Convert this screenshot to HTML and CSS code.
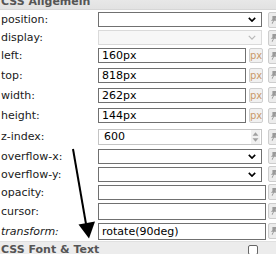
FILE: index.html
```html
<!DOCTYPE html>
<html>
<head>
  <meta name="viewport" content="width=device-width, initial-scale=1.0">
  <title>CSS Properties</title>
  <link rel="stylesheet" href="styles.css">
</head>
<body>

  <div class="panel">
    <div class="section-head">CSS Allgemein</div>

    <!-- position -->
    <div class="row h19">
      <span class="lbl">position:</span>
      <div class="ctl"><div class="select"><svg class="chev" viewBox="0 0 10 6"><polyline points="1,1 5,5 9,1"/></svg></div></div>
      <span class="pin"><svg viewBox="0 0 10 12"><path d="M3 1h5l-1 4 2 2H5l-2 4-1-1 2-3H1l2-2z"/></svg></span>
    </div>

    <!-- display -->
    <div class="row h17">
      <span class="lbl">display:</span>
      <div class="ctl"><div class="select disabled"><svg class="chev" viewBox="0 0 10 6"><polyline points="1,1 5,5 9,1"/></svg></div></div>
      <span class="pin"><svg viewBox="0 0 10 12"><path d="M3 1h5l-1 4 2 2H5l-2 4-1-1 2-3H1l2-2z"/></svg></span>
    </div>

    <div class="row h19">
      <span class="lbl">left:</span>
      <div class="ctl"><input class="txt unit" type="text" value="160px"><span class="px">px</span></div>
      <span class="pin"><svg viewBox="0 0 10 12"><path d="M3 1h5l-1 4 2 2H5l-2 4-1-1 2-3H1l2-2z"/></svg></span>
    </div>

    <div class="row h20">
      <span class="lbl">top:</span>
      <div class="ctl"><input class="txt unit" type="text" value="818px"><span class="px">px</span></div>
      <span class="pin"><svg viewBox="0 0 10 12"><path d="M3 1h5l-1 4 2 2H5l-2 4-1-1 2-3H1l2-2z"/></svg></span>
    </div>

    <div class="row h20">
      <span class="lbl">width:</span>
      <div class="ctl"><input class="txt unit" type="text" value="262px"><span class="px">px</span></div>
      <span class="pin"><svg viewBox="0 0 10 12"><path d="M3 1h5l-1 4 2 2H5l-2 4-1-1 2-3H1l2-2z"/></svg></span>
    </div>

    <div class="row h21">
      <span class="lbl">height:</span>
      <div class="ctl"><input class="txt unit" type="text" value="144px"><span class="px">px</span></div>
      <span class="pin"><svg viewBox="0 0 10 12"><path d="M3 1h5l-1 4 2 2H5l-2 4-1-1 2-3H1l2-2z"/></svg></span>
    </div>

    <!-- z-index number field -->
    <div class="row h21">
      <span class="lbl">z-index:</span>
      <div class="ctl">
        <div class="number">
          <span class="num-val">600</span>
          <span class="spin"><svg viewBox="0 0 7 12"><polygon points="1,5 6,5 3.5,2"/><polygon points="1,7 6,7 3.5,10"/></svg></span>
        </div>
      </div>
      <span class="pin"><svg viewBox="0 0 10 12"><path d="M3 1h5l-1 4 2 2H5l-2 4-1-1 2-3H1l2-2z"/></svg></span>
    </div>

    <div class="row h18">
      <span class="lbl">overflow-x:</span>
      <div class="ctl"><div class="select"><svg class="chev" viewBox="0 0 10 6"><polyline points="1,1 5,5 9,1"/></svg></div></div>
      <span class="pin"><svg viewBox="0 0 10 12"><path d="M3 1h5l-1 4 2 2H5l-2 4-1-1 2-3H1l2-2z"/></svg></span>
    </div>

    <div class="row h18">
      <span class="lbl">overflow-y:</span>
      <div class="ctl"><div class="select"><svg class="chev" viewBox="0 0 10 6"><polyline points="1,1 5,5 9,1"/></svg></div></div>
      <span class="pin"><svg viewBox="0 0 10 12"><path d="M3 1h5l-1 4 2 2H5l-2 4-1-1 2-3H1l2-2z"/></svg></span>
    </div>

    <div class="row h18">
      <span class="lbl">opacity:</span>
      <div class="ctl"><input class="txt wide" type="text" value=""></div>
      <span class="pin"><svg viewBox="0 0 10 12"><path d="M3 1h5l-1 4 2 2H5l-2 4-1-1 2-3H1l2-2z"/></svg></span>
    </div>

    <div class="row h20">
      <span class="lbl">cursor:</span>
      <div class="ctl"><input class="txt wide tall" type="text" value=""></div>
      <span class="pin"><svg viewBox="0 0 10 12"><path d="M3 1h5l-1 4 2 2H5l-2 4-1-1 2-3H1l2-2z"/></svg></span>
    </div>

    <div class="row h20">
      <span class="lbl italic">transform:</span>
      <div class="ctl"><input class="txt wide tall" type="text" value="rotate(90deg)"></div>
      <span class="pin"><svg viewBox="0 0 10 12"><path d="M3 1h5l-1 4 2 2H5l-2 4-1-1 2-3H1l2-2z"/></svg></span>
    </div>

    <div class="section-head second">
      <span>CSS Font &amp; Text</span>
      <span class="check"></span>
    </div>
  </div>

  <!-- annotation arrow drawn over the form -->
  <svg class="arrow" width="276" height="254" viewBox="0 0 276 254">
    <line x1="73" y1="149" x2="86" y2="224"/>
    <polygon points="78.5,224.5 95,221.5 89,238.5"/>
  </svg>

</body>
</html>
```

FILE: styles.css
```css
* { box-sizing: border-box; }
body {
  margin: 0;
  width: 276px;
  height: 254px;
  overflow: hidden;
  position: relative;
  background: #fff;
  font-family: "DejaVu Sans", Verdana, sans-serif;
  font-size: 11px;
  color: #1a1a1a;
}
.panel {
  margin-top: -7px;
}
.section-head {
  height: 17px;
  line-height: 17px;
  padding-left: 1px;
  font-weight: bold;
  color: #555;
  background: linear-gradient(#ececec, #e2e2e2);
  border-bottom: 1px solid #d6d6d6;
}
.section-head.second {
  display: flex;
  justify-content: space-between;
  align-items: center;
  height: 15px;
  border-bottom: none;
  border-top: 1px solid #e0e0e0;
  background: #ececec;
  padding-right: 18px;
}
.check {
  width: 10px;
  height: 10px;
  margin-top: 2px;
  border: 1px solid #666;
  border-radius: 2px;
  background: #fff;
}
.row {
  display: grid;
  grid-template-columns: 98px 168px 1fr;
  align-items: center;
}
.h17 { height: 17px; }
.h18 { height: 18px; }
.h19 { height: 19px; }
.h20 { height: 20px; }
.h21 { height: 21px; }
.lbl {
  padding-left: 1px;
  white-space: nowrap;
}
.italic { font-style: italic; }
.ctl {
  display: flex;
  align-items: center;
  height: 100%;
}
.select {
  position: relative;
  width: 164px;
  height: 15px;
  border: 1px solid #707070;
  background: #fff;
}
.select.disabled {
  border-color: #dadada;
  background: #f7f7f7;
}
.chev {
  position: absolute;
  right: 5px;
  top: 4px;
  width: 8px;
  height: 5px;
  fill: none;
  stroke: #000;
  stroke-width: 2;
}
.disabled .chev { stroke: #b8b8b8; stroke-width: 1.5; }
.txt {
  height: 15px;
  margin: 0;
  padding: 0 3px;
  border: 1px solid #707070;
  font-family: inherit;
  font-size: 11px;
  color: #000;
  background: #fff;
  outline: none;
}
.unit { width: 148px; }
.wide { width: 168px; }
.tall { height: 17px; }
.px {
  width: 14px;
  height: 15px;
  margin-left: 3px;
  border: 1px solid #cfcfcf;
  border-radius: 2px;
  background: #f1f1f1;
  color: #c99a6b;
  font-size: 10px;
  line-height: 13px;
  text-align: center;
}
.number {
  display: flex;
  align-items: center;
  width: 164px;
  height: 16px;
  border: 1px solid #c4c4c4;
  background: #fff;
}
.num-val {
  flex: 1;
  padding-left: 5px;
  color: #000;
}
.spin {
  width: 9px;
  height: 14px;
  margin-right: 1px;
  background: #f0f0f0;
}
.spin svg {
  width: 9px;
  height: 14px;
  fill: #a0a0a0;
}
.pin {
  width: 14px;
  height: 16px;
  margin-left: 2px;
  border: 1px solid #cdcdcd;
  border-radius: 2px;
  background: #ececec;
  display: flex;
  align-items: center;
  padding-left: 1px;
}
.pin svg {
  width: 8px;
  height: 10px;
  fill: #9a9a9a;
}
.arrow {
  position: absolute;
  left: 0;
  top: 0;
  pointer-events: none;
}
.arrow line {
  stroke: #000;
  stroke-width: 2;
}
.arrow polygon { fill: #000; }
```
